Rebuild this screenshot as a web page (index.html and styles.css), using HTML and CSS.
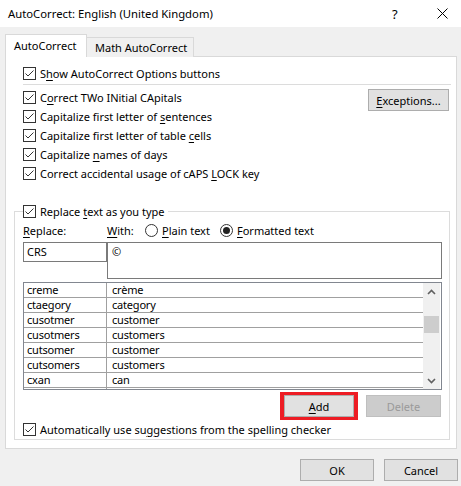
FILE: index.html
```html
<!DOCTYPE html>
<html>
<head>
<meta charset="utf-8">
<link rel="stylesheet" href="styles.css">
</head>
<body>
<div class="window">
  <div class="titlebar">
    <span class="title">AutoCorrect: English (United Kingdom)</span>
    <span class="help">?</span>
    <svg class="close" width="11" height="11" viewBox="0 0 11 11"><path d="M0.5 0.5L10.5 10.5M10.5 0.5L0.5 10.5" stroke="#000" stroke-width="1" fill="none"/></svg>
  </div>
  <div class="main">
    <div class="tabs">
      <div class="tab active">AutoCorrect</div>
      <div class="tab">Math AutoCorrect</div>
    </div>
    <div class="panel">
      <div class="opt top"><svg class="cb" width="13" height="13" viewBox="0 0 13 13"><rect x="0.5" y="0.5" width="12" height="12" fill="#fff" stroke="#333"/><path d="M2.5 6.5L5 9L10.5 3.5" stroke="#333" fill="none"/></svg><span>S<u>h</u>ow AutoCorrect Options buttons</span></div>
      <div class="sep"></div>
      <div class="caps">
        <div class="opts">
          <div class="opt"><svg class="cb" width="13" height="13" viewBox="0 0 13 13"><rect x="0.5" y="0.5" width="12" height="12" fill="#fff" stroke="#333"/><path d="M2.5 6.5L5 9L10.5 3.5" stroke="#333" fill="none"/></svg><span>C<u>o</u>rrect TWo INitial CApitals</span></div>
          <div class="opt"><svg class="cb" width="13" height="13" viewBox="0 0 13 13"><rect x="0.5" y="0.5" width="12" height="12" fill="#fff" stroke="#333"/><path d="M2.5 6.5L5 9L10.5 3.5" stroke="#333" fill="none"/></svg><span>Capitalize first letter of <u>s</u>entences</span></div>
          <div class="opt"><svg class="cb" width="13" height="13" viewBox="0 0 13 13"><rect x="0.5" y="0.5" width="12" height="12" fill="#fff" stroke="#333"/><path d="M2.5 6.5L5 9L10.5 3.5" stroke="#333" fill="none"/></svg><span>Capitalize first letter of table <u>c</u>ells</span></div>
          <div class="opt"><svg class="cb" width="13" height="13" viewBox="0 0 13 13"><rect x="0.5" y="0.5" width="12" height="12" fill="#fff" stroke="#333"/><path d="M2.5 6.5L5 9L10.5 3.5" stroke="#333" fill="none"/></svg><span>Capitalize <u>n</u>ames of days</span></div>
          <div class="opt"><svg class="cb" width="13" height="13" viewBox="0 0 13 13"><rect x="0.5" y="0.5" width="12" height="12" fill="#fff" stroke="#333"/><path d="M2.5 6.5L5 9L10.5 3.5" stroke="#333" fill="none"/></svg><span>Correct accidental usage of cAPS <u>L</u>OCK key</span></div>
        </div>
        <div class="btn exc"><u>E</u>xceptions...</div>
      </div>
      <fieldset class="group">
        <legend class="opt legend"><svg class="cb" width="13" height="13" viewBox="0 0 13 13"><rect x="0.5" y="0.5" width="12" height="12" fill="#fff" stroke="#333"/><path d="M2.5 6.5L5 9L10.5 3.5" stroke="#333" fill="none"/></svg><span>Replace <u>t</u>ext as you type</span></legend>
        <div class="labels">
          <span class="lbl-replace"><u>R</u>eplace:</span>
          <span class="lbl-with"><u>W</u>ith:</span>
          <span class="radio plain"><svg width="13" height="13" viewBox="0 0 13 13"><circle cx="6.5" cy="6.5" r="6" fill="#fff" stroke="#333"/></svg><span><u>P</u>lain text</span></span>
          <span class="radio"><svg width="13" height="13" viewBox="0 0 13 13"><circle cx="6.5" cy="6.5" r="6" fill="#fff" stroke="#333"/><circle cx="6.5" cy="6.5" r="3.5" fill="#222"/></svg><span><u>F</u>ormatted text</span></span>
        </div>
        <div class="inputs">
          <div class="in-replace">CRS</div>
          <div class="in-with">©</div>
        </div>
        <div class="list">
          <div class="rows">
            <div class="row"><span class="c1">creme</span><span class="c2">crème</span></div>
            <div class="row"><span class="c1">ctaegory</span><span class="c2">category</span></div>
            <div class="row"><span class="c1">cusotmer</span><span class="c2">customer</span></div>
            <div class="row"><span class="c1">cusotmers</span><span class="c2">customers</span></div>
            <div class="row"><span class="c1">cutsomer</span><span class="c2">customer</span></div>
            <div class="row"><span class="c1">cutsomers</span><span class="c2">customers</span></div>
            <div class="row"><span class="c1">cxan</span><span class="c2">can</span></div>
            <div class="row"><span class="c1"></span><span class="c2"></span></div>
          </div>
          <div class="scrollbar">
            <svg class="arrow" width="9" height="6" viewBox="0 0 9 6"><path d="M1 5L4.5 1.5L8 5" stroke="#606060" stroke-width="1.6" fill="none"/></svg>
            <div class="track"><div class="thumb"></div></div>
            <svg class="arrow" width="9" height="6" viewBox="0 0 9 6"><path d="M1 1L4.5 4.5L8 1" stroke="#606060" stroke-width="1.6" fill="none"/></svg>
          </div>
        </div>
        <div class="actions">
          <div class="highlight"><div class="btn add"><u>A</u>dd</div></div>
          <div class="btn delete">Delete</div>
        </div>
        <div class="opt last"><svg class="cb" width="13" height="13" viewBox="0 0 13 13"><rect x="0.5" y="0.5" width="12" height="12" fill="#fff" stroke="#333"/><path d="M2.5 6.5L5 9L10.5 3.5" stroke="#333" fill="none"/></svg><span>Automatically use su<u>g</u>gestions from the spelling checker</span></div>
      </fieldset>
    </div>
    <div class="footer">
      <div class="btn ok">OK</div>
      <div class="btn cancel">Cancel</div>
    </div>
  </div>
</div>
</body>
</html>
```
FILE: styles.css
```css
* { box-sizing: border-box; }
html, body { margin: 0; padding: 0; }
body {
  width: 461px;
  height: 486px;
  overflow: hidden;
  font-family: "Noto Sans", "Liberation Sans", sans-serif;
  font-size: 11px;
  color: #000;
  background: #f0f0f0;
}
u { text-decoration-thickness: 1px; text-underline-offset: 2px; }

.titlebar {
  height: 27px;
  background: #fff;
  display: flex;
  align-items: center;
  padding-left: 8px;
}
.title { font-size: 11.3px; flex: 1; }
.help { font-size: 13px; width: 45px; }
.close { margin-right: 13px; }

.main { padding: 7px 4px 0 5px; }

.tabs {
  display: flex;
  align-items: flex-end;
  height: 23px;
  margin-bottom: -1px;
}
.tab {
  border: 1px solid #d9d9d9;
  border-bottom: none;
  background: #f0f0f0;
  height: 20px;
  padding: 0 0 0 8px;
  display: flex;
  align-items: center;
  margin-left: -1px;
  white-space: nowrap;
  width: 108px;
}
.tab.active {
  position: relative;
  z-index: 1;
  background: #fff;
  height: 23px;
  width: 82px;
  margin-left: 0;
  padding-bottom: 2px;
}

.panel {
  background: #fff;
  border: 1px solid #d9d9d9;
  padding: 7px 0 8px 0;
}

.opt {
  display: flex;
  align-items: center;
  height: 19px;
  gap: 4px;
  white-space: nowrap;
}
.opt.top { margin-left: 17px; }
.cb { flex: none; }

.sep {
  height: 1px;
  background: #dcdcdc;
  margin: 1px 5px 0 17px;
}

.caps {
  display: flex;
  justify-content: space-between;
  align-items: flex-start;
  margin: 3px 7px 0 17px;
}
.btn {
  background: #e1e1e1;
  border: 1px solid #adadad;
  display: flex;
  align-items: center;
  justify-content: center;
  height: 22px;
  white-space: nowrap;
}
.exc { width: 81px; margin-top: 1px; }

.group {
  margin: 19px 6px 0 8px;
  padding: 0 7px 1px 8px;
  border: 1px solid #dcdcdc;
  min-width: 0;
}
.legend { padding: 0 3px 0 0; height: 18px; }

.labels {
  display: flex;
  align-items: center;
  height: 19px;
  white-space: nowrap;
  margin-top: 1px;
}
.lbl-replace { width: 84px; }
.lbl-with { width: 38px; }
.radio { display: flex; align-items: center; gap: 4px; }
.radio.plain { width: 75px; }

.inputs {
  display: flex;
  align-items: flex-start;
  margin-top: 2px;
}
.in-replace {
  width: 84px;
  height: 20px;
  border: 1px solid #7a7a7a;
  padding: 1px 3px;
  line-height: 16px;
}
.in-with {
  flex: 1;
  height: 37px;
  border: 1px solid #7a7a7a;
  padding: 1px 4px;
  line-height: 16px;
}

.list {
  margin-top: 3px;
  height: 108px;
  border: 1px solid #828790;
  display: flex;
  overflow: hidden;
}
.rows { flex: 1; }
.row {
  display: flex;
  height: 15px;
  border-bottom: 1px solid #a0a0a0;
  line-height: 14px;
  letter-spacing: -0.2px;
}
.c1 {
  width: 83px;
  border-right: 1px solid #a0a0a0;
  padding-left: 3px;
  flex: none;
}
.c2 { padding-left: 5px; }
.scrollbar {
  width: 17px;
  background: #f0f0f0;
  display: flex;
  flex-direction: column;
  align-items: center;
  margin-right: 1px;
}
.arrow { flex: none; margin: 6px 0 4px; }
.scrollbar .arrow:last-child { margin: 4px 0 5px; }
.track { flex: 1; width: 100%; padding-top: 17px; }
.thumb { height: 17px; background: #cdcdcd; margin: 0 1px; }

.actions {
  display: flex;
  justify-content: flex-end;
  align-items: center;
  gap: 8px;
  margin-top: 2px;
  height: 28px;
  padding-right: 1px;
}
.highlight {
  border: 3px solid #ed1c24;
  border-left-width: 4px;
  border-right-width: 4px;
  width: 78px;
  height: 28px;
}
.add { height: 22px; }
.delete {
  width: 75px;
  background: #cccccc;
  border-color: #bfbfbf;
  color: #9a9a9a;
}
.opt.last { height: 18px; }

.footer {
  display: flex;
  justify-content: flex-end;
  gap: 10px;
  margin: 10px -1px 0 0;
}
.ok, .cancel { width: 74px; height: 22px; }
```
